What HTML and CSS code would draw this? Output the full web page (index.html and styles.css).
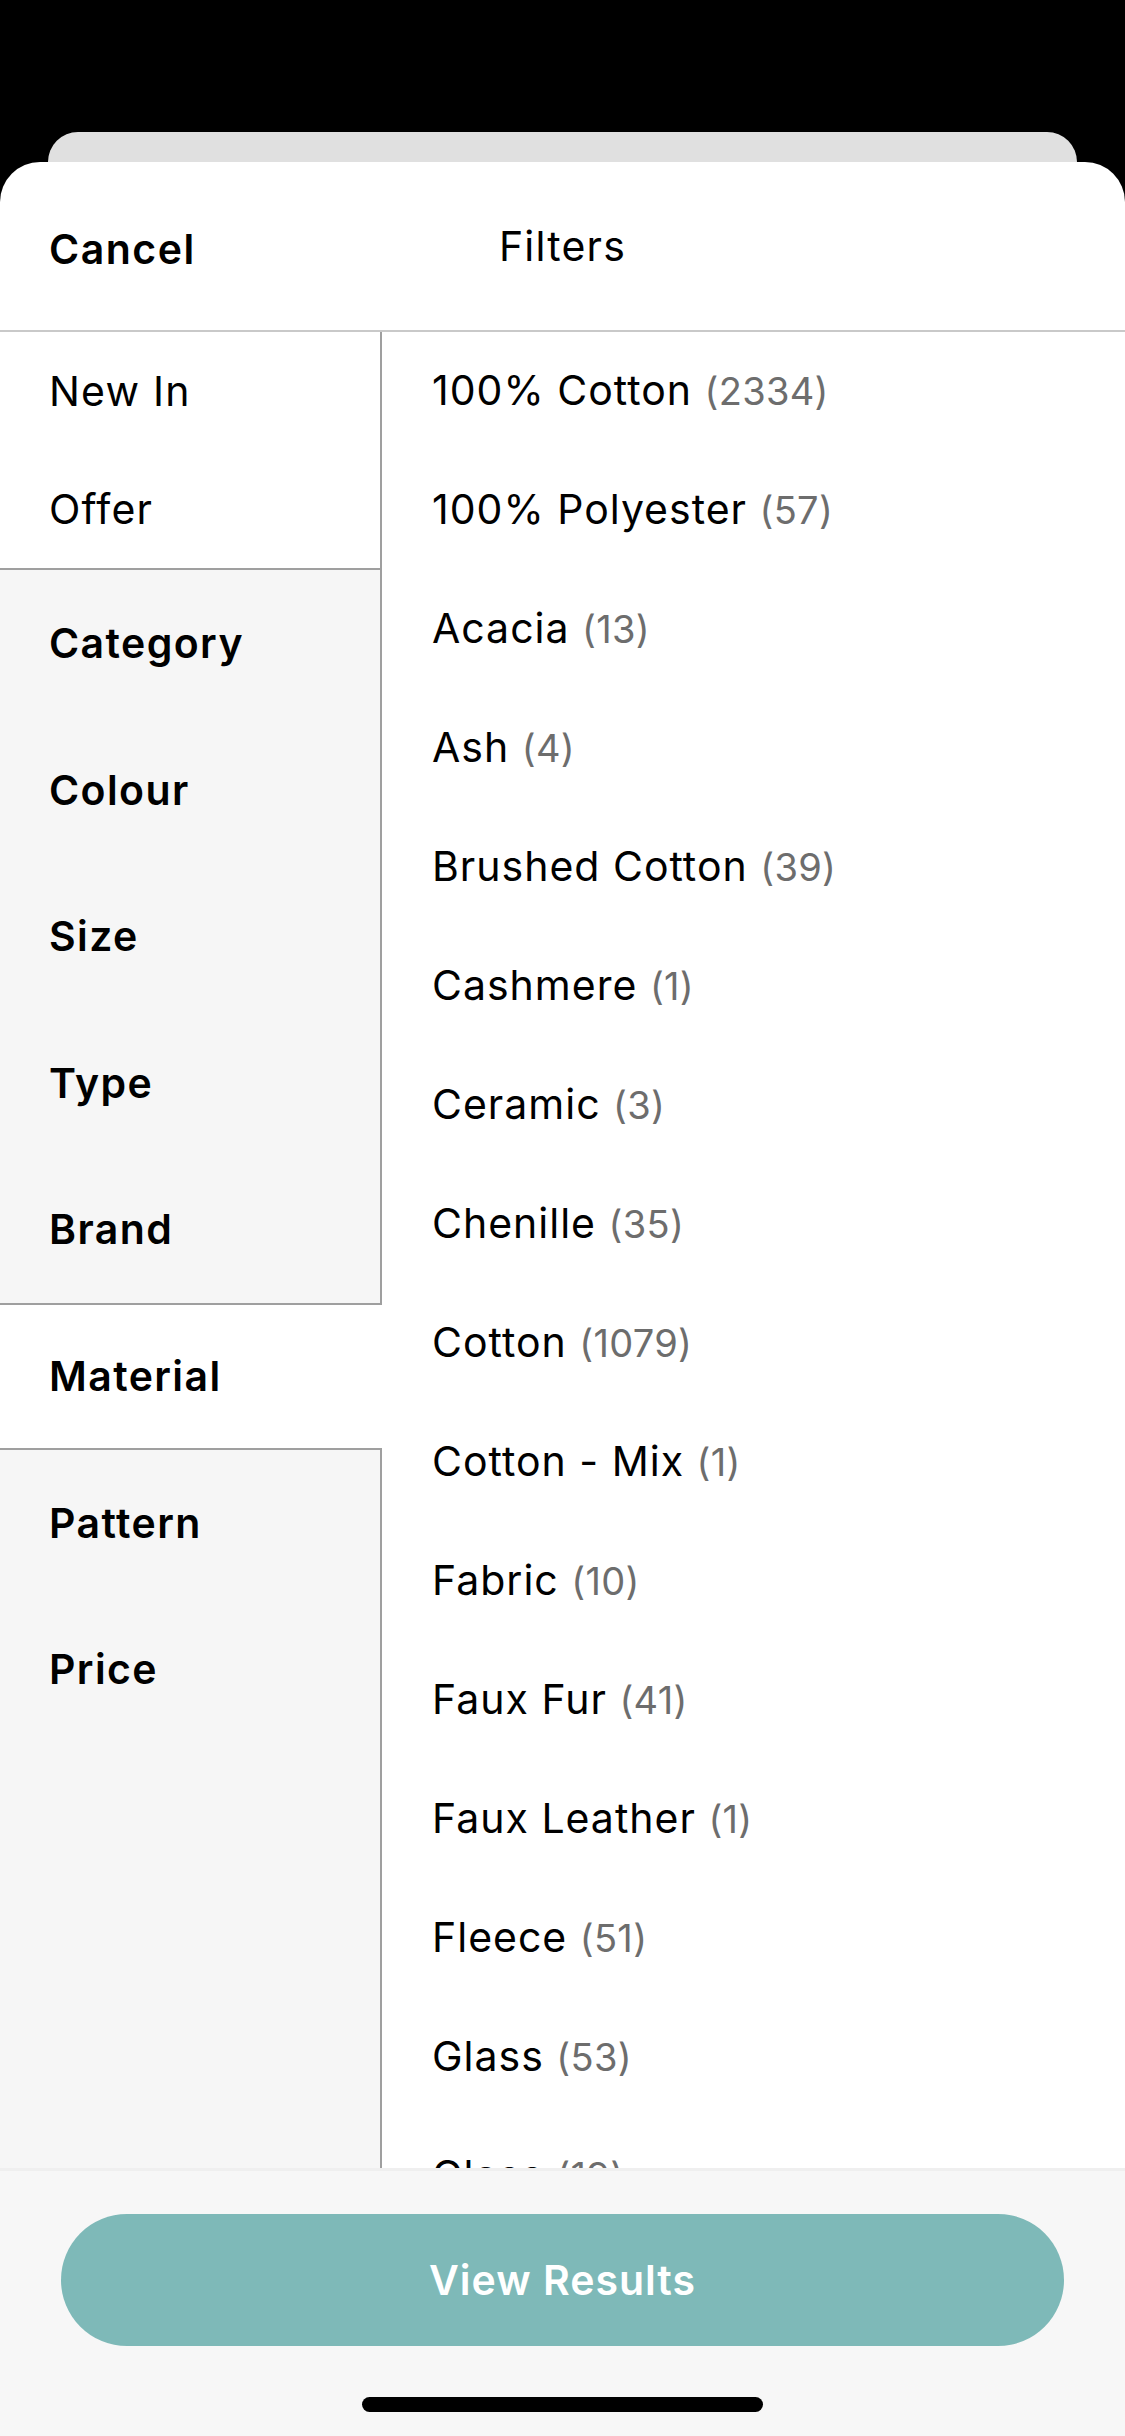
FILE: index.html
```html
<!DOCTYPE html>
<html lang="en">
<head>
<meta charset="utf-8">
<title>Filters</title>
<link rel="stylesheet" href="styles.css">
</head>
<body>
<div class="screen">
  <div class="backsheet"></div>
  <div class="sheet">
    <header class="header">
      <span class="cancel">Cancel</span>
      <span class="title">Filters</span>
      <span></span>
    </header>
    <div class="body">
      <nav class="sidebar">
        <div class="group group-plain">
          <div class="tab tab-short">New In</div>
          <div class="tab tab-short">Offer</div>
        </div>
        <div class="group group-grey">
          <div class="tab strong">Category</div>
          <div class="tab strong">Colour</div>
          <div class="tab strong">Size</div>
          <div class="tab strong">Type</div>
          <div class="tab strong">Brand</div>
        </div>
        <div class="tab tab-active strong">Material</div>
        <div class="group group-grey group-fill">
          <div class="tab strong">Pattern</div>
          <div class="tab strong">Price</div>
        </div>
      </nav>
      <ul class="options">
        <li class="option">100% Cotton <span class="count">(2334)</span></li>
        <li class="option">100% Polyester <span class="count">(57)</span></li>
        <li class="option">Acacia <span class="count">(13)</span></li>
        <li class="option">Ash <span class="count">(4)</span></li>
        <li class="option">Brushed Cotton <span class="count">(39)</span></li>
        <li class="option">Cashmere <span class="count">(1)</span></li>
        <li class="option">Ceramic <span class="count">(3)</span></li>
        <li class="option">Chenille <span class="count">(35)</span></li>
        <li class="option">Cotton <span class="count">(1079)</span></li>
        <li class="option">Cotton - Mix <span class="count">(1)</span></li>
        <li class="option">Fabric <span class="count">(10)</span></li>
        <li class="option">Faux Fur <span class="count">(41)</span></li>
        <li class="option">Faux Leather <span class="count">(1)</span></li>
        <li class="option">Fleece <span class="count">(51)</span></li>
        <li class="option">Glass <span class="count">(53)</span></li>
        <li class="option">Glass <span class="count">(19)</span></li>
      </ul>
    </div>
    <footer class="footer">
      <button class="results">View Results</button>
      <div class="home-indicator"></div>
    </footer>
  </div>
</div>
</body>
</html>
```

FILE: styles.css
```css
* { box-sizing: border-box; }

html, body {
  margin: 0;
  padding: 0;
  background: #000;
}

body {
  width: 1125px;
  height: 2436px;
  overflow: hidden;
  font-family: Inter, "Open Sans", sans-serif;
  color: #000;
  letter-spacing: 1.2px;
}

.screen {
  width: 1125px;
  height: 2436px;
  display: flex;
  flex-direction: column;
}

.backsheet {
  margin: 132px 48px 0;
  height: 30px;
  flex: none;
  background: #e0e0e0;
  border-radius: 34px 34px 0 0;
}

.sheet {
  flex: 1;
  min-height: 0;
  display: flex;
  flex-direction: column;
  background: #fff;
  border-radius: 40px 40px 0 0;
  overflow: hidden;
}

.header {
  flex: none;
  height: 170px;
  padding: 0 0 0 49px;
  display: grid;
  grid-template-columns: 1fr auto 1fr;
  align-items: center;
  border-bottom: 2px solid #c9c9c9;
  font-size: 41px;
}

.cancel {
  font-weight: 600;
  padding-top: 6px;
  letter-spacing: 1.5px;
}

.title {
  font-weight: 400;
  margin-left: -49px;
}

.body {
  flex: 1;
  min-height: 0;
  display: flex;
  overflow: hidden;
}

.sidebar {
  flex: none;
  width: 382px;
  display: flex;
  flex-direction: column;
}

.group {
  border-right: 2px solid #9f9f9f;
}

.group-plain {
  background: #fff;
}

.group-grey {
  background: #f6f6f6;
  border-top: 2px solid #9f9f9f;
  border-bottom: 2px solid #9f9f9f;
}

.group-fill {
  flex: 1;
  border-bottom: none;
}

.tab {
  height: 146.5px;
  padding-left: 49px;
  display: flex;
  align-items: center;
  font-size: 41px;
  font-weight: 400;
}

.tab-short {
  height: 118px;
}

.tab-active {
  height: 143px;
  background: #fff;
}

.strong {
  font-weight: 600;
  letter-spacing: 1.4px;
}

.options {
  flex: 1;
  margin: 0;
  padding: 0 0 0 50px;
  list-style: none;
}

.option {
  height: 119px;
  line-height: 117px;
  font-size: 41px;
  white-space: nowrap;
  letter-spacing: 1px;
}

.count {
  font-size: 38px;
  color: #6d6d6d;
  letter-spacing: 0.3px;
}

.footer {
  flex: none;
  height: 268px;
  background: #f7f7f7;
  border-top: 3px solid #efefef;
  padding: 43px 61px 0;
  display: flex;
  flex-direction: column;
  align-items: center;
}

.results {
  width: 100%;
  height: 132px;
  border: none;
  border-radius: 66px;
  background: #7eb9b8;
  color: #fff;
  font-family: Inter, "Open Sans", sans-serif;
  font-size: 41px;
  font-weight: 600;
  letter-spacing: 1px;
}

.home-indicator {
  margin-top: 51px;
  width: 401px;
  height: 15px;
  border-radius: 8px;
  background: #000;
}
```
